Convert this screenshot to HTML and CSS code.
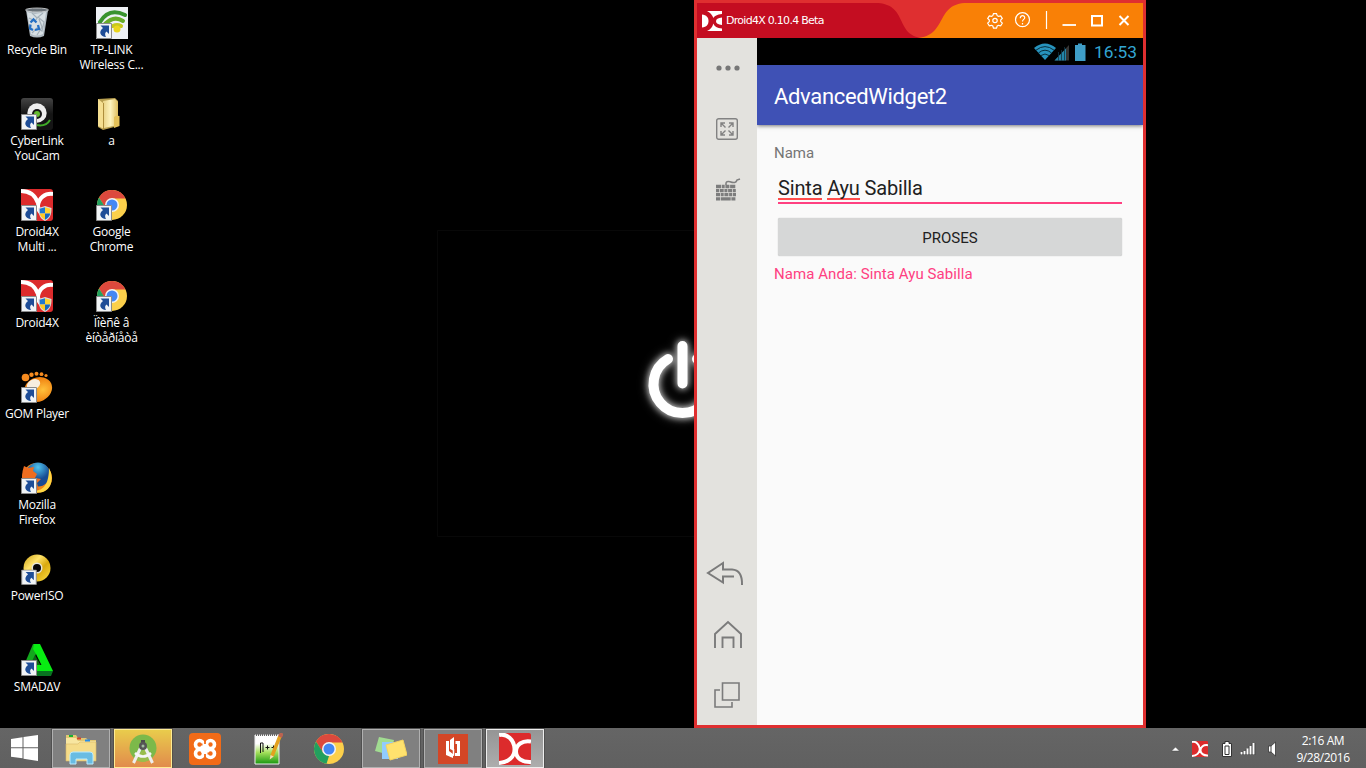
FILE: index.html
```html
<!DOCTYPE html>
<html lang="en">
<head>
<meta charset="utf-8">
<title>Desktop</title>
<link rel="stylesheet" href="styles.css">
</head>
<body>
<svg class="defs" aria-hidden="true">
<defs>
<linearGradient id="gold" x1="0" y1="0" x2="1" y2="1"><stop offset="0" stop-color="#c99e10"/><stop offset=".35" stop-color="#ffe36b"/><stop offset=".6" stop-color="#d9a90e"/><stop offset="1" stop-color="#ffe247"/></linearGradient>
<linearGradient id="folder" x1="0" x2="1"><stop offset="0" stop-color="#e9d283"/><stop offset=".5" stop-color="#fdf3bd"/><stop offset="1" stop-color="#dfbf60"/></linearGradient>
<linearGradient id="np" y1="0" y2="1" x2="0"><stop offset=".3" stop-color="#fff"/><stop offset=".6" stop-color="#a5e05c"/><stop offset="1" stop-color="#17960f"/></linearGradient>
<linearGradient id="cam" y2="1" x2="0"><stop offset="0" stop-color="#444"/><stop offset=".5" stop-color="#151515"/></linearGradient>
<radialGradient id="gom" cx=".65" cy=".6"><stop offset="0" stop-color="#ffc13b"/><stop offset="1" stop-color="#f08010"/></radialGradient>
<radialGradient id="globe" cx=".5" cy=".2"><stop offset="0" stop-color="#4fc4ee"/><stop offset="1" stop-color="#174b92"/></radialGradient>
<symbol id="arrow" viewBox="0 0 16 16"><path d="M.5 .5h15v15H.5z" fill="#f1f4f6" stroke="#8b8b8b"/><path d="M4.500 2.500h8.500v8.500l-2.500-2.500C9 9.500 8.500 11.500 10 14 4.500 13.500 2 9 7 5z" fill="#1e4d97"/></symbol>
<symbol id="shield" viewBox="0 0 14 15"><path d="M7 0L13.500 2C13.500 9 12 12.500 7 15 2 12.500.5 9 .5 2z" fill="#d8dde3"/><path d="M7 1.200V7.500H1.800L1.600 2.700z" fill="#2178cf"/><path d="M7 1.200V7.500H12.200L12.400 2.700z" fill="#ffd42e"/><path d="M7 7.500V13.700Q2.400 11.500 1.800 7.500z" fill="#ffca23"/><path d="M7 7.500V13.700Q11.600 11.500 12.200 7.500z" fill="#1768bb"/></symbol>
<symbol id="chrome" viewBox="0 0 32 32"><circle cx="16" cy="16" r="15" fill="#fcd04b"/><path d="M3 8.500A15 15 0 0 1 29.500 9.500H16L9.700 19.500z" fill="#dc493d"/><path d="M3 8.500L10 19.500 16 23 13.500 30.800A15 15 0 0 1 3 8.500z" fill="#22a05f"/><circle cx="16" cy="16" r="7" fill="#f3f3f3"/><circle cx="16" cy="16" r="5.500" fill="#4387f4"/></symbol>
<symbol id="dx" viewBox="0 0 32 32"><rect width="32" height="32" rx="2" fill="#dc2b2c"/><path d="M0 2C8 0 15 7 15.500 15.500S9 29.500 0 30M32 8.500C23 7 17 12 17 18.500S23 29.500 32 29" fill="none" stroke="#fff" stroke-width="4"/></symbol>
<symbol id="dxapp" viewBox="0 0 32 32"><rect width="32" height="32" rx="3" fill="#dc2b2c"/><path d="M0 2C9 2 14.500 7 17 14M32 5C24 4 17.500 9 17 17 17 20 18 22 20 24" fill="none" stroke="#fff" stroke-width="4"/></symbol>
</defs>
</svg>

<div class="desktop">
  <svg class="wallpaper" viewBox="0 0 260 310"><path d="M.5 .5H260M.5 .5V306.500H260" fill="none" stroke="#080808"/><g class="glow" fill="none" stroke="#fff" stroke-linecap="round" stroke-width="10"><path d="M231 129A29 29 0 1 0 260 129M245.500 116V153.500"/></g></svg>

  <div class="icons">
    <div class="shortcut"><svg viewBox="0 0 32 32"><path d="M5 3L27 3 23 29Q16 32 9 29z" fill="#aeb8c0"/><path d="M6 5l8 2 11-2-3 22q-6 3-12 0z" fill="#d7dfe4"/><path d="M11 6l5 5 6-5M8 11l6 3 3-4 6 5-2 9-5-3-5 5M18 12l3 8-5 8" fill="none" stroke="#a4b0b9" stroke-width="1.200"/><ellipse cx="16" cy="3" rx="11.500" ry="2" fill="#697178" stroke="#d9dcdd" stroke-width=".8"/><path d="M9.500 15.500l3-3 3 3M9.500 17.500l-.5 4 3 1.500M14 23l4-1-1-4" fill="none" stroke="#246fc4" stroke-width="2.300"/></svg><span>Recycle Bin</span></div>
    <div class="shortcut"><svg viewBox="0 0 32 32"><rect width="32" height="32" fill="url(#cam)" rx="3"/><circle cx="16" cy="15" r="9.700" fill="#eee"/><circle cx="16" cy="16" r="5" fill="#181818"/><circle cx="16" cy="16" r="3" fill="#65bd2e"/><path d="M15 27Q25 29 29 22" fill="none" stroke="#40ac29" stroke-width="2"/><use href="#arrow" y="16" width="16" height="16"/></svg><span>CyberLink<br>YouCam</span></div>
    <div class="shortcut"><svg viewBox="0 0 32 32"><use href="#dxapp"/><use href="#arrow" y="16" width="16" height="16"/><use href="#shield" x="17" y="17" width="14" height="15"/></svg><span>Droid4X<br>Multi ...</span></div>
    <div class="shortcut"><svg viewBox="0 0 32 32"><use href="#dxapp"/><use href="#arrow" y="16" width="16" height="16"/><use href="#shield" x="17" y="17" width="14" height="15"/></svg><span>Droid4X</span></div>
    <div class="shortcut"><svg viewBox="0 0 32 32"><g fill="#f68b1f"><circle cx="4.500" cy="6.500" r="3.800"/><circle cx="10.500" cy="3.800" r="2.200"/><circle cx="15.500" cy="2.800" r="2"/><circle cx="20.500" cy="3.200" r="1.900"/><circle cx="25" cy="4.500" r="1.600"/></g><ellipse cx="17" cy="18.500" rx="14.500" ry="12" transform="rotate(-25 17 18.500)" fill="url(#gom)"/><ellipse cx="12.500" cy="13.500" rx="7" ry="5" transform="rotate(-25 12.500 13.500)" fill="#f7eee0"/><use href="#arrow" y="16" width="16" height="16"/></svg><span>GOM Player</span></div>
    <div class="shortcut"><svg viewBox="0 0 32 32"><circle cx="16" cy="16" r="15" fill="#f18716"/><circle cx="17" cy="12.500" r="12" fill="url(#globe)"/><path d="M28 6Q33 15 29 24C25 31 17 32 12 29 24 29 28 20 28 6z" fill="#ffd744"/><path d="M3 4l4 2 6-1-1 4 4 3-2 4 6 1-4 4 2 7Q8 29 3 24-1 15 3 4z" fill="#ee6d20"/><use href="#arrow" y="16" width="16" height="16"/></svg><span>Mozilla<br>Firefox</span></div>
    <div class="shortcut"><svg viewBox="0 0 32 32"><circle cx="16" cy="15" r="13.500" fill="url(#gold)"/><circle cx="16" cy="15" r="5.500" fill="#e5e5dc"/><circle cx="16" cy="15" r="4" fill="#060606"/><use href="#arrow" y="16.500" width="16" height="15.500"/></svg><span>PowerISO</span></div>
    <div class="shortcut"><svg viewBox="0 0 32 32"><path d="M12 0h7L10 22 6 28 1 26z" fill="#13a71d"/><path d="M13 0h6L32 27H13V21h7.500L15 10 12 5z" fill="#08ec12"/><path d="M1 27h31l-2 5H4z" fill="#087320"/><path d="M14 11L19.500 21H9z" fill="#0b6414"/><use href="#arrow" y="16" width="16" height="16"/></svg><span>SMADΔV</span></div>
    <div class="shortcut second"><svg viewBox="0 0 32 32"><path fill="#eef1f5" d="M0 0h32v32H0z"/><g fill="none" stroke-linecap="round"><path d="M4 15Q13 0 29 8" stroke="#39932e" stroke-width="4"/><path d="M9 17Q18 8 27 14" stroke="#66ac28" stroke-width="4"/><path d="M17 19Q21 17 25 19" stroke="#c6c81b" stroke-width="4"/></g><circle cx="21" cy="22" r="3.500" fill="#ead51c"/><use href="#arrow" y="16" width="16" height="16"/></svg><span>TP-LINK<br>Wireless C...</span></div>
    <div class="shortcut"><svg viewBox="0 0 32 32"><path d="M2 1L19 0 22 3V28L7 32 2 29z" fill="#b79e4f"/><path d="M7 3L19 1 22 4V27L8 30z" fill="url(#folder)"/><path d="M2 1L7 5 8 31 2 28z" fill="#f5df91"/><path d="M7.500 5V31" stroke="#ae8e3c"/><path d="M18 19Q20 17 23.500 18V28L18 30z" fill="#e4c158"/></svg><span>a</span></div>
    <div class="shortcut"><svg viewBox="0 0 32 32"><use href="#chrome"/><use href="#arrow" y="16" width="16" height="16"/></svg><span>Google<br>Chrome</span></div>
    <div class="shortcut"><svg viewBox="0 0 32 32"><use href="#chrome"/><use href="#arrow" y="16" width="16" height="16"/></svg><span>Ïîèñê â<br>èíòåðíåòå</span></div>
  </div>

  <main class="window">
    <header class="titlebar">
      <svg class="brand" viewBox="0 0 20 20"><path d="M0 3.500C4.500 4 6.500 6.500 6.500 10S4.500 16 0 16.500z" fill="#fff"/><path d="M5 0H20V3C15 3.500 12.500 5 11.500 7 10 3.500 8 1.500 5 0zM5 20C8.500 18.500 10.500 16 11.300 12.500 12.500 15.500 15 17 20 17.500V20zM20 6.500V14C16 13.800 14 12.500 14 10.300S16 6.800 20 6.500z" fill="#fff"/></svg>
      <span class="wtitle">Droid4X 0.10.4 Beta</span>
      <svg class="controls" viewBox="0 0 246 35"><path d="M-24 0H246V35H-24z" fill="#df2f30"/><path d="M-25 0H-22C12 0 -3 33 26 35H-25z" fill="#c40d21"/><path d="M70 0C38 0 51 33 20 35H246V0z" fill="#f98006"/>
      <g fill="none" stroke="#fff" stroke-width="1.200"><path d="M96.500 10.600h3l.7 2.100 1.300.7 2.200-.5 1.600 2.600-1.600 1.600v1.500l1.600 1.600-1.600 2.600-2.200-.5-1.300.7-.7 2.100h-3l-.7-2.100-1.300-.7-2.200.5-1.600-2.600 1.600-1.600v-1.500l-1.600-1.600 1.600-2.600 2.200.5 1.300-.7z"/><circle cx="98" cy="17.500" r="2.200"/><circle cx="125.500" cy="16.700" r="7"/><path d="M123.300 15.200C123.300 11.700 127.900 12 127.700 15 127.500 16.400 125.500 16.600 125.500 18.500M125.500 19.900v1.500"/></g>
      <g fill="none" stroke="#fff" stroke-width="2"><path d="M149.500 8V26" stroke-width="1.200"/><path d="M165.500 22H179" stroke-width="1.800"/><path d="M195 13h10v9.500h-10z"/><path d="M222.500 13l9 9M231.500 13l-9 9"/></g></svg>
    </header>
    <div class="wbody">
      <aside class="sidebar">
        <svg class="dots" viewBox="0 0 24 6"><g fill="#777"><circle cx="3" cy="3" r="2.600"/><circle cx="12" cy="3" r="2.600"/><circle cx="21" cy="3" r="2.600"/></g></svg>
        <svg class="expand" viewBox="0 0 22 22"><g fill="none" stroke="#828282" stroke-width="1.400"><rect x=".7" y=".7" width="20.600" height="20.600" rx="2"/><path d="M5 9V5h4M5 5l4.500 4.500M13 5h4v4M17 5l-4.500 4.500M5 13v4h4M5 17l4.500-4.500M13 17h4v-4M17 17l-4.500-4.500"/></g></svg>
        <svg class="keys" viewBox="0 0 26 24"><path d="M11 7V5.500Q11 3 15 3.700 21 6 22 2L25 1" fill="none" stroke="#808080" stroke-width="1.600"/><g fill="none" stroke="#7d7d7d" stroke-width="3.300"><path d="M1 8.500h20" stroke-dasharray="5 .7 3 .7 4 .7"/><path d="M1 12.600h20" stroke-dasharray="3 .7 4 .7"/><path d="M1 16.700h20" stroke-dasharray="4 .7 3 .7"/><path d="M1 20.800h20" stroke-dasharray="4 .7 10 .7 4 .7"/></g></svg>
        <svg class="back" viewBox="0 0 38 25"><path d="M28 15.500H17V21.500L2 12 17 2V8.500H26Q36.500 9 36 24" fill="none" stroke="#7b7b7b" stroke-width="2"/></svg>
        <svg class="home" viewBox="0 0 28 28"><path d="M1 28V14L14 2 27 14V28M8.500 28V17.500h11V28" fill="none" stroke="#7b7b7b" stroke-width="1.900"/></svg>
        <svg class="recent" viewBox="0 0 26 26"><path d="M8.500 1H25V18H8.500zM6 8H1V25H18V20" fill="none" stroke="#7b7b7b" stroke-width="1.600"/></svg>
      </aside>
      <section class="phone">
        <div class="status">
          <svg viewBox="0 0 54 20"><path d="M0 6Q11 -3 22 6L11 18z" fill="#2793bd"/><g fill="none" stroke="#06222e" stroke-width=".9"><path d="M2 8.200Q11 1 20 8.200M4.500 10.900Q11 5.500 17.500 10.900M7 13.500Q11 10.500 15 13.500"/></g><path d="M20.500 18.500L35 3V18.500z" fill="#353535"/><path d="M20.500 18.500L32 6.500V18.500z" fill="#2384a8"/><path d="M24.500 10v9M27.500 8v11M30.500 5v14" stroke="#123646" stroke-width=".8"/><path d="M41 3h3V1.500h4V3h3.500v16H41z" fill="#3f9ec7"/></svg>
          <span>16:53</span>
        </div>
        <div class="appbar"><span>AdvancedWidget2</span></div>
        <div class="form">
          <div class="label">Nama</div>
          <div class="field"><u>Sinta</u> <u>Ayu</u> Sabilla</div>
          <div class="button"><span>PROSES</span></div>
          <div class="result">Nama Anda: Sinta Ayu Sabilla</div>
        </div>
      </section>
    </div>
  </main>
</div>

<footer class="taskbar">
  <div class="start"><svg viewBox="0 0 28 26"><path d="M0 4L11.500 2.300V12.300H0zM12.500 2.100L27 0V12.300H12.500zM0 13.300H11.500V23.300L0 21.700zM12.500 13.300H27V26L12.500 23.800z" fill="#fff"/></svg></div>
  <div class="task open"><svg viewBox="0 0 32 32"><path d="M1 2h10l2 3h8l2 2h8v20H1z" fill="#e2c773"/><path d="M1 5h10l2 3h18v20H1z" fill="#f8e6a0"/><path d="M1 11h12l2-2h16v19H1z" fill="#f5dc89" stroke="#d9bb68" stroke-width=".6"/><path d="M4 3h4" stroke="#16b331" stroke-width="2"/><path d="M12 5.500h4" stroke="#d4452b" stroke-width="2"/><path d="M20 7.500h5" stroke="#278de6" stroke-width="2"/><path d="M5 31V22Q5 19 8 19H25Q28 19 28 22V31H22V26H11V31z" fill="#69bce3" stroke="#b9eaff"/></svg></div>
  <div class="task studio"><svg viewBox="0 0 32 32"><circle cx="16" cy="15" r="13.500" fill="#7cb94a"/><path d="M7 26A13.500 13.500 0 0 0 25 25L19 14z" fill="#99bd4c"/><path d="M13.500 15L6.500 30M18.500 15L25.500 30" stroke="#eee" stroke-width="3"/><path d="M8 20Q16 27 24 20" fill="none" stroke="#f6f6f6" stroke-width="2.600"/><path d="M16 7v6" stroke="#4c4c4c" stroke-width="4"/><circle cx="16" cy="13" r="4" fill="#555"/><circle cx="16" cy="13" r="1.500" fill="#a2bba2"/></svg></div>
  <div class="task"><svg viewBox="0 0 32 32"><rect width="32" height="32" rx="4" fill="#f26b18"/><path d="M12 12.500h8v7h-8z" fill="#fff"/><g fill="none" stroke="#fff" stroke-width="3.600"><circle cx="10.500" cy="11.500" r="4"/><circle cx="21.500" cy="11.500" r="4"/><circle cx="10.500" cy="20.500" r="4"/><circle cx="21.500" cy="20.500" r="4"/></g><path d="M10.500 11.500h3M18.500 20.500h3M16 6v5M16 21v5" stroke="#f26b18" stroke-width="1.800"/></svg></div>
  <div class="task"><svg viewBox="0 0 32 32"><path d="M4 2H28V31H4z" fill="url(#np)" stroke="#eee"/><path d="M5 2h22" stroke="#666" stroke-width="2" stroke-dasharray="1 1"/><path d="M9.500 20V10h2.500v9M14.500 14.500h4M16.500 12.500v4M20.500 14.500h4M22.500 12.500v4" fill="none" stroke="#111" stroke-width="1"/><path d="M29 3L21 23" stroke="#e3a11e" stroke-width="3.500"/><path d="M31 0L29 4" stroke="#bb6351" stroke-width="4"/><path d="M19.500 22l3.200 1.500-4 3z" fill="#f7dbb0"/></svg></div>
  <div class="task"><svg viewBox="0 0 32 32"><use href="#chrome"/></svg></div>
  <div class="task open"><svg viewBox="0 0 32 32"><path d="M4 4L19 7 15 22 0 18z" fill="#a1dc91"/><path d="M7 9H23V26H7z" fill="#91ccff"/><path d="M11 12L28 7 32 22 15 27z" fill="#ffe26e" stroke="#f5d35e"/></svg></div>
  <div class="task open"><svg viewBox="0 0 32 32"><path fill="#d34626" d="M1 1h30v30H1z"/><path d="M9 8h3v10l4 3v4L9 22zM18.500 8H23v15h-5v-3h2V11h-1.500z" fill="#fff"/><path d="M13 7l4-3v14l-4-2z" fill="#fff"/><path d="M16.500 16v6l-3 1.500" fill="none" stroke="#fff" stroke-width="1.500"/></svg></div>
  <div class="task active"><svg viewBox="0 0 32 32"><use href="#dx"/></svg></div>
  <div class="tray">
    <svg class="up" viewBox="0 0 9 6"><path d="M.5 5L4.500 1 8.500 5z" fill="#fff" stroke="#444" stroke-width=".5"/></svg>
    <svg class="trayapp" viewBox="0 0 32 32"><use href="#dx"/></svg>
    <svg class="battery" viewBox="0 0 10 16"><path d="M3 .5h4v2h2.500v13H.5v-13H3z" fill="#fff" stroke="#333"/><path d="M3 5h4v8.500H3z" fill="#fff" stroke="#333"/></svg>
    <svg class="signal" viewBox="0 0 17 15"><path d="M1.500 14v-3M4.500 14v-4M7.500 14V8M10.500 14V5M13.500 14V2" stroke="#333" stroke-width="3.500"/><path d="M1.500 13.500V11M4.500 13.500V10M7.500 13.500V7.500M10.500 13.500V5M13.500 13.500V2" stroke="#fff" stroke-width="2"/></svg>
    <svg class="sound" viewBox="0 0 9 16"><path d="M.5 5H3L7.500 1V15L3 11H.5z" fill="#fff" stroke="#333" stroke-width=".8"/><path d="M3 5v6" stroke="#444"/></svg>
    <div class="clock">2:16 AM<br>9/28/2016</div>
  </div>
</footer>
</body>
</html>
```
FILE: styles.css
```css
* { box-sizing: border-box; }
body { margin: 0; width: 1366px; height: 768px; overflow: hidden; background: #000; display: flex; flex-direction: column; font-family: "Open Sans", "Noto Sans", sans-serif; }
svg { display: block; flex: none; }
.defs { position: absolute; width: 0; height: 0; }
.desktop { position: relative; height: 728px; flex: none; }
.wallpaper { position: absolute; left: 437px; top: 230px; width: 260px; height: 310px; }
.glow { filter: drop-shadow(0 0 3px #ccc) drop-shadow(0 0 4px #666); }
.icons { display: grid; grid-template-rows: repeat(8, 91px); grid-template-columns: 74px 75px; grid-auto-flow: column; width: 149px; }
.shortcut { display: flex; flex-direction: column; align-items: center; padding-top: 7px; gap: 3px; }
.second { grid-column: 2; grid-row: 1; }
.shortcut svg { width: 32px; height: 32px; }
.shortcut span { color: #fff; font-size: 12px; line-height: 15px; text-align: center; white-space: nowrap; letter-spacing: -.25px; text-shadow: 0 1px 1px #000; }

.window { position: absolute; left: 694px; top: 0; width: 452px; height: 728px; border: 3px solid #df2f30; background: #fafafa; display: flex; flex-direction: column; }
.titlebar { height: 35px; flex: none; background: #c40d21; display: flex; align-items: center; padding-left: 5px; color: #fff; }
.brand { width: 20px; height: 20px; }
.wtitle { font: 11px "DejaVu Sans", sans-serif; letter-spacing: -.72px; margin-left: 4px; width: 171px; white-space: nowrap; }
.controls { width: 246px; height: 35px; overflow: visible; }
.wbody { flex: 1; display: flex; min-height: 0; }
.sidebar { width: 60px; background: #e3e2de; display: flex; flex-direction: column; align-items: center; padding: 27px 0 0; }
.dots { width: 24px; height: 6px; margin-left: 1px; }
.expand { width: 22px; height: 22px; margin-top: 47px; }
.keys { width: 26px; height: 24px; margin: 38px 0 0 2px; }
.back { width: 38px; height: 25px; margin: 359px 4px 0 0; }
.home { width: 28px; height: 28px; margin: 34px 0 0 1px; }
.recent { width: 26px; height: 26px; margin-top: 34px; }
.phone { flex: 1; font-family: Roboto, sans-serif; display: flex; flex-direction: column; }
.status { height: 27px; background: #000; display: flex; justify-content: flex-end; align-items: center; padding-right: 5px; gap: 6px; color: #33a6d3; font-size: 17.300px; }
.status svg { width: 54px; height: 20px; }
.status span { width: 44px; white-space: nowrap; }
.appbar { position: relative; height: 60px; flex: none; background: #3f51b5; color: #fff; font-size: 22px; letter-spacing: -.33px; display: flex; align-items: center; padding: 2px 17px 0; box-shadow: 0 1px 4px #0008; clip-path: inset(0 0 -8px 0); }
.form { padding: 18px 17px 0; display: flex; flex-direction: column; }
.label { height: 20px; line-height: 20px; color: #757575; font-size: 15px; }
.field { margin: 12px 4px 0; height: 29px; line-height: 26px; border-bottom: 2px solid #ff4081; font-size: 20px; letter-spacing: -.17px; color: #212121; }
.field u { text-decoration: none; box-shadow: 0 1px #ff4d4d, 0 2px #ff4d4d; display: inline-block; height: 23px; }
.button { height: 38px; margin: 14px 4px 0; padding-top: 2px; background: #d6d7d7; border-radius: 2px; display: flex; justify-content: center; align-items: center; font-size: 15px; color: #212121; box-shadow: 0 0 1px #aaa; }
.result { height: 20px; line-height: 20px; margin-top: 8px; color: #ff4081; font-size: 15px; letter-spacing: .07px; white-space: nowrap; }

.taskbar { height: 40px; background: linear-gradient(#656565, #606060); display: flex; gap: 4px; padding-top: 1px; flex: none; }
.start { width: 48px; display: flex; align-items: center; justify-content: center; padding: 0 0 2px 2px; }
.start svg { width: 28px; height: 26px; }
.task { width: 58px; height: 39px; flex: none; display: flex; align-items: center; justify-content: center; }
.task svg { width: 32px; height: 32px; }
.open { background: #808080; border: 1px solid #b0b0b0; box-shadow: 0 0 0 1px #505050; }
.studio { background: linear-gradient(#e9cc4c, #e18b4c); border: 1px solid #ffec93; box-shadow: 0 0 0 1px #55504a; }
.active { background: linear-gradient(#959595, #adadad); border: 1px solid #eee; box-shadow: 0 0 0 1px #505050; }
.tray { margin-left: auto; display: flex; align-items: center; padding-right: 7px; }
.up { width: 9px; height: 6px; }
.trayapp { width: 16px; height: 16px; margin-left: 12px; }
.battery { width: 10px; height: 16px; margin-left: 14px; }
.signal { width: 17px; height: 15px; margin-left: 8px; }
.sound { width: 9px; height: 16px; margin-left: 11px; }
.clock { width: 72px; margin-left: 10px; text-align: center; color: #fff; font-size: 12px; line-height: 17px; letter-spacing: -.4px; }
```
